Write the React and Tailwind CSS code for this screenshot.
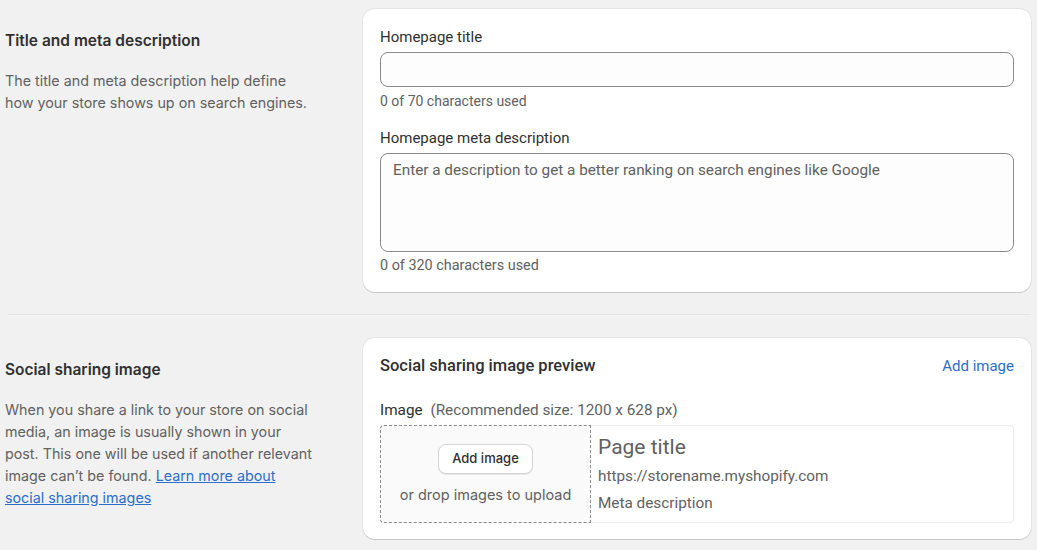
import React from "react";

const Section = ({ children, aside }) => (
  <div className="flex">
    <div className="w-[358px] shrink-0">
      <div className="max-w-[310px]">{aside}</div>
    </div>
    <div className="flex-1">{children}</div>
  </div>
);

const App = () => {
  return (
    <div className="min-h-screen bg-[#f1f1f1] pl-[5px] pr-[6px] pt-[9px] font-['Inter',sans-serif]">
      {/* Title and meta */}
      <Section
        aside={
          <div className="pt-[22px]">
            <h2 className="text-[15.5px] font-semibold text-[#303030] leading-[20px]">
              Title and meta description
            </h2>
            <p className="mt-[19px] text-[14.3px] leading-[22px] text-[#616161]">
              The title and meta description help define how your store shows
              up on search engines.
            </p>
          </div>
        }
      >
        <div className="bg-white rounded-[12px] shadow-[0_1px_0_rgba(0,0,0,0.12),0_0_0_1px_rgba(0,0,0,0.05)] px-[17px] pt-[18px] pb-[17px] font-['Roboto',sans-serif]">
          <label className="block text-[15px] leading-[20px] text-[#303030]">
            Homepage title
          </label>
          <div className="mt-[5px] h-[35px] rounded-[8px] border border-[#8a8a8a] bg-[#fdfdfd]"></div>
          <p className="mt-[5px] text-[14px] leading-[18px] text-[#616161]">
            0 of 70 characters used
          </p>
          <label className="block mt-[18px] text-[15px] leading-[20px] text-[#303030]">
            Homepage meta description
          </label>
          <div className="mt-[5px] h-[99px] rounded-[8px] border border-[#8a8a8a] bg-[#fdfdfd] px-[12px] pt-[6px] text-[15.3px] leading-[20px] text-[#616161]">
            Enter a description to get a better ranking on search engines like
            Google
          </div>
          <p className="mt-[5px] text-[14.4px] leading-[18px] text-[#616161]">
            0 of 320 characters used
          </p>
        </div>
      </Section>

      <div className="mt-[22px] mb-[23px] ml-[3px] h-px bg-[#e4e4e4]"></div>

      {/* Social sharing */}
      <Section
        aside={
          <div className="pt-[22px]">
            <h2 className="text-[15.5px] font-semibold text-[#303030] leading-[20px]">
              Social sharing image
            </h2>
            <p className="mt-[19px] text-[14.3px] leading-[22px] text-[#616161]">
              When you share a link to your store on social media, an image is
              usually shown in your post. This one will be used if another
              relevant image can’t be found.{" "}
              <a href="#" className="text-[#2c6ecb] underline">
                Learn more about social sharing images
              </a>
            </p>
          </div>
        }
      >
        <div className="bg-white rounded-[12px] shadow-[0_1px_0_rgba(0,0,0,0.12),0_0_0_1px_rgba(0,0,0,0.05)] px-[17px] pt-[18px] pb-[16px] font-['Roboto',sans-serif]">
          <div className="flex items-center justify-between">
            <h3 className="text-[16.5px] leading-[20px] font-medium text-[#303030]">
              Social sharing image preview
            </h3>
            <a href="#" className="text-[15px] leading-[20px] text-[#2c6ecb]">
              Add image
            </a>
          </div>
          <p className="mt-[24px] text-[15.3px] leading-[20px] text-[#303030]">
            Image{" "}
            <span className="ml-1 text-[#616161]">
              (Recommended size: 1200 x 628 px)
            </span>
          </p>
          <div className="mt-[5px] flex h-[98px] rounded-[4px] border border-[#ebebeb]">
            <div className="w-[211px] -m-px shrink-0 border border-dashed border-[#8a8a8a] rounded-l-[4px] bg-[#fafafa] flex flex-col items-center justify-center font-['Inter',sans-serif]">
              <button className="h-[30px] px-[13px] rounded-[8px] border border-[#d4d4d4] bg-white shadow-[0_1px_0_rgba(0,0,0,0.08)] text-[13px] font-medium text-[#303030]">
                Add image
              </button>
              <p className="mt-[11px] text-[14.5px] leading-[20px] text-[#616161]">
                or drop images to upload
              </p>
            </div>
            <div className="pl-[8px] pt-[7px]">
              <p className="text-[21px] leading-[28px] text-[#616161]">
                Page title
              </p>
              <p className="mt-[5px] text-[15.3px] leading-[20px] text-[#616161]">
                https://storename.myshopify.com
              </p>
              <p className="mt-[7px] text-[15.3px] leading-[20px] text-[#616161]">
                Meta description
              </p>
            </div>
          </div>
        </div>
      </Section>
    </div>
  );
};

export default App;
